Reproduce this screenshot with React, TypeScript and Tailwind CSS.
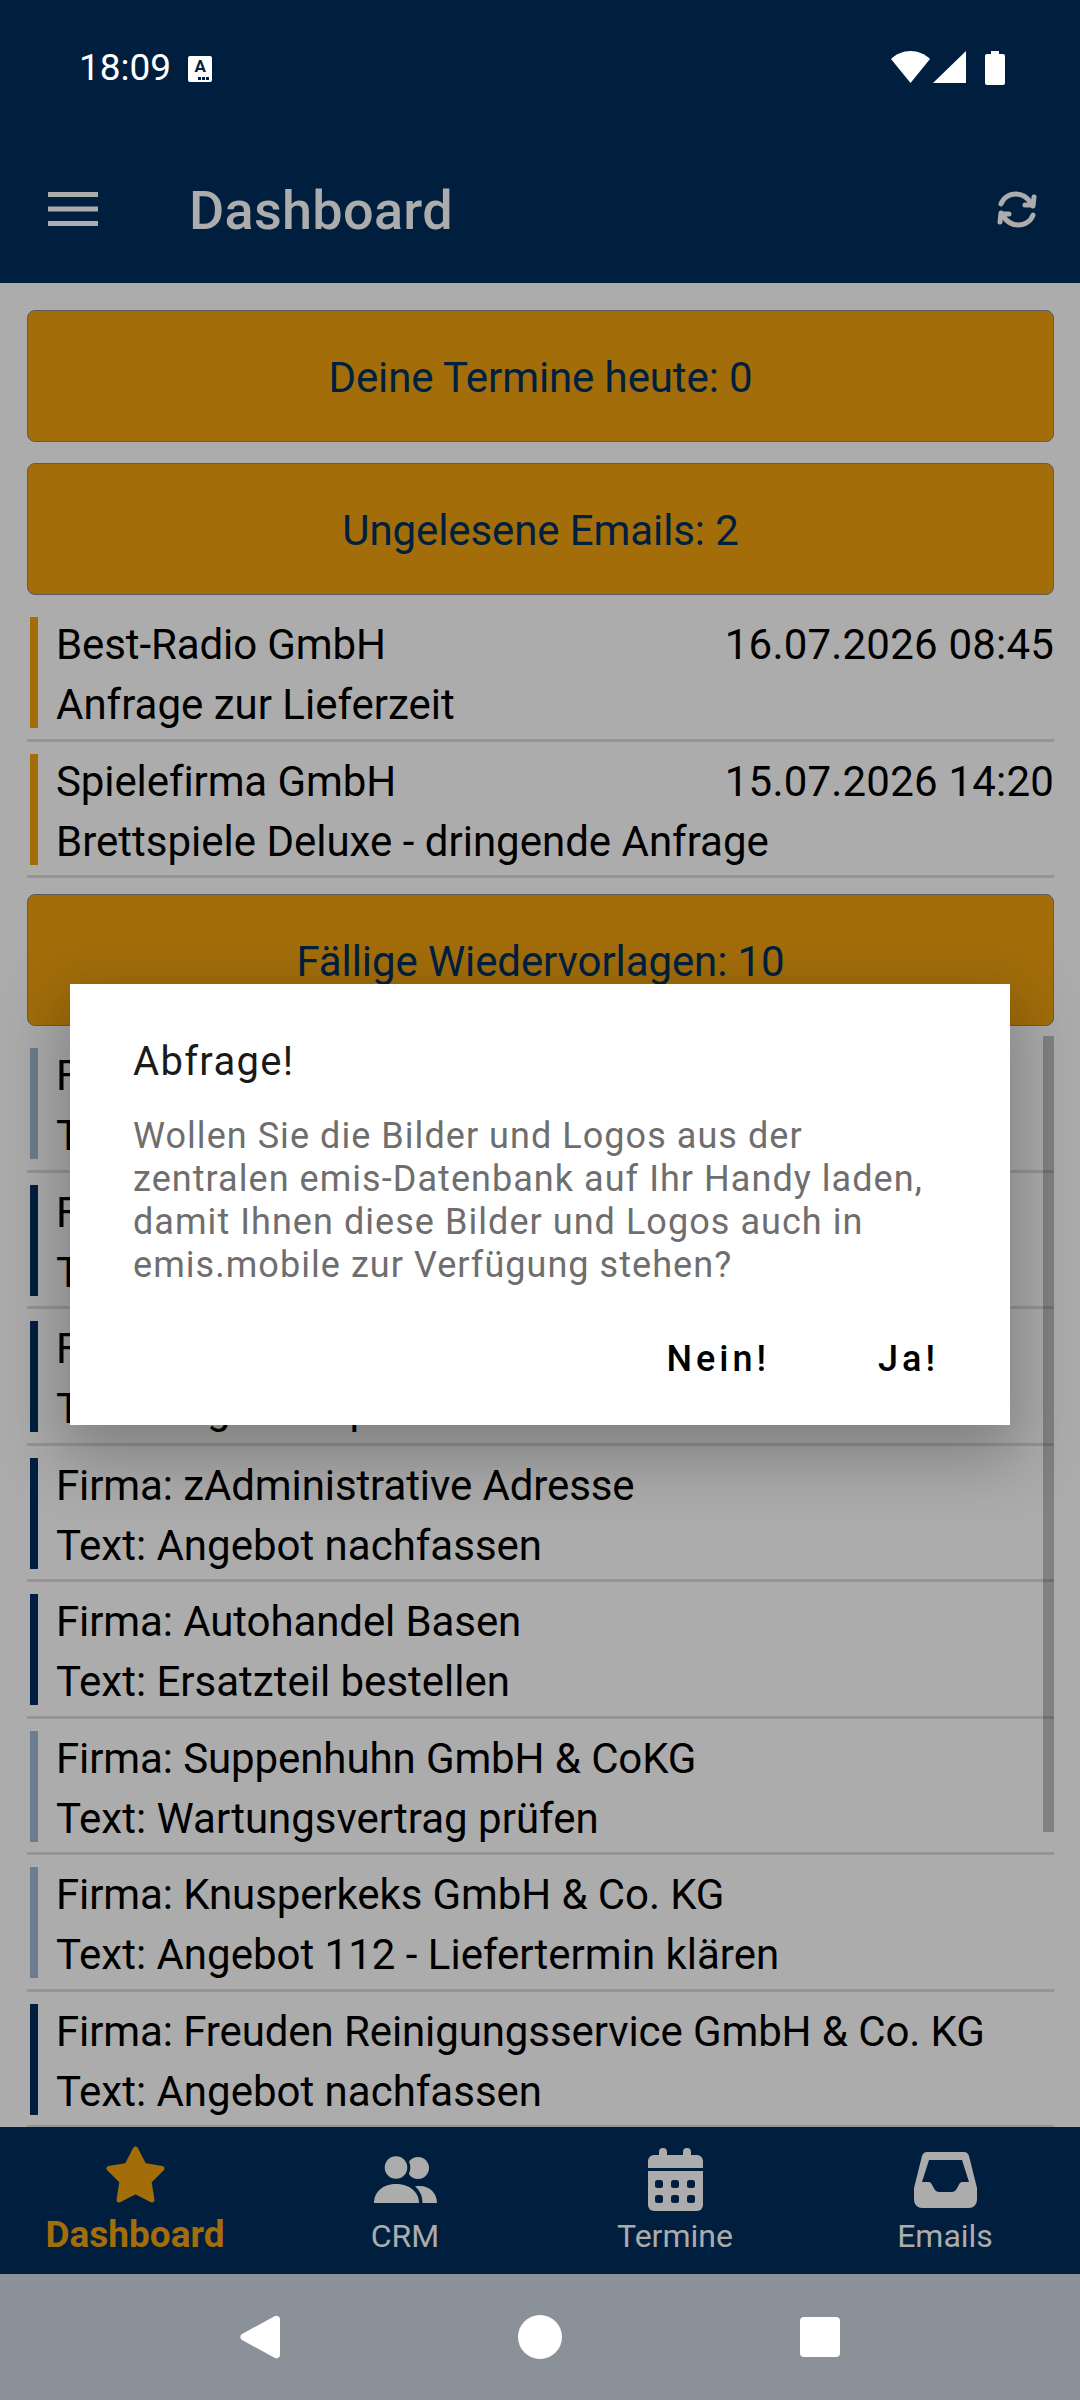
const navy = "#001f3f"

const emails = [
  { name: "Best-Radio GmbH", date: "16.07.2026 08:45", text: "Anfrage zur Lieferzeit" },
  { name: "Spielefirma GmbH", date: "15.07.2026 14:20", text: "Brettspiele Deluxe - dringende Anfrage" },
]

// the first three rows sit behind the dialog
const followUps = [
  { firma: "Firma:", text: "Text:", bar: "bg-[#6b7d8e]" },
  { firma: "Firma:", text: "Text:", bar: "bg-[#001f3f]" },
  { firma: "Firma:", text: "Text: Angebot Spedition", bar: "bg-[#001f3f]" },
  { firma: "Firma: zAdministrative Adresse", text: "Text: Angebot nachfassen", bar: "bg-[#001f3f]" },
  { firma: "Firma: Autohandel Basen", text: "Text: Ersatzteil bestellen", bar: "bg-[#001f3f]" },
  { firma: "Firma: Suppenhuhn GmbH & CoKG", text: "Text: Wartungsvertrag prüfen", bar: "bg-[#6b7d8e]" },
  { firma: "Firma: Knusperkeks GmbH & Co. KG", text: "Text: Angebot 112 - Liefertermin klären", bar: "bg-[#6b7d8e]" },
  { firma: "Firma: Freuden Reinigungsservice GmbH & Co. KG", text: "Text: Angebot nachfassen", bar: "bg-[#001f3f]" },
]

function Banner({ label, mb }: { label: string; mb: string }) {
  return (
    <div className={`h-[132px] ml-[27px] mr-[26px] ${mb} pt-[3px] flex items-center justify-center rounded-[8px] border-[1.5px] border-[#5c5c5c] bg-[#a36d0a] text-[42px] tracking-[-0.1px] text-[#00203f]`}>
      {label}
    </div>
  )
}

function Row({ bar, left, right, sub }: { bar: string; left: string; right?: string; sub: string }) {
  return (
    <div className="ml-[27px] mr-[26px] h-[136.5px] border-b-[3px] border-[#959595] pt-[12px] flex">
      <div className={`ml-[3px] h-[111px] w-[8px] shrink-0 ${bar}`}></div>
      <div className="ml-[18px] -mt-[2px] flex-1 text-[42px] leading-[60px] text-black whitespace-nowrap">
        <div className="flex justify-between tracking-[-0.1px]">
          <span>{left}</span>
          {right && <span className="tracking-[0.2px]">{right}</span>}
        </div>
        <div>{sub}</div>
      </div>
    </div>
  )
}

function TabItem({ icon, label, active }: { icon: React.ReactNode; label: string; active?: boolean }) {
  return (
    <div className={`flex-1 flex flex-col items-center pt-[19px] ${active ? "text-[#a36d0a]" : "text-[#acacac]"}`}>
      <div className="h-[71px] flex items-start justify-center">{icon}</div>
      <div className={active ? "text-[37px] leading-[40px] font-bold -mt-[2px]" : "text-[32px] leading-[40px] -mt-[1px]"}>{label}</div>
    </div>
  )
}

function StarIcon() {
  return (
    <svg width="59" height="57" viewBox="0 0 59 57">
      <path d="M29.500 3 38 19.500 56 22.500 43 35.500 46 54 29.500 45.500 13 54 16 35.500 3 22.500 21 19.500z" fill="currentColor" stroke="currentColor" strokeWidth="5" strokeLinejoin="round" />
    </svg>
  )
}

function PeopleIcon() {
  return (
    <svg className="mt-[9px]" width="63" height="48" viewBox="0 0 63 48" fill="currentColor">
      <circle cx="44" cy="13" r="11" />
      <circle cx="22" cy="12.500" r="12.800" stroke={navy} strokeWidth="3" />
      <path d="M41 31.500C55 29 63 38 63 48H48.500C48.500 41 46 35.500 41 31.500z" />
      <path d="M0 48C0 36 10 29 22 29s23 7 23 19z" />
    </svg>
  )
}

function CalendarIcon() {
  const dots = [11, 27, 43]
  return (
    <svg className="mt-[2px]" width="55" height="63" viewBox="0 0 55 63" fill="currentColor">
      <rect x="11" y="0" width="8" height="14" rx="4" />
      <rect x="35" y="0" width="8" height="14" rx="4" />
      <path d="M6 7H49a6 6 0 0 1 6 6v7H0v-7a6 6 0 0 1 6-6z" />
      <path fillRule="evenodd" d="M0 23H55V57a6 6 0 0 1-6 6H6a6 6 0 0 1-6-6z" />
      {dots.map((x) => (
        <g key={x} fill={navy}>
          <rect x={x - 4} y="32" width="8" height="8" rx="2.500" />
          <rect x={x - 4} y="47" width="8" height="8" rx="2.500" />
        </g>
      ))}
    </svg>
  )
}

function TrayIcon() {
  return (
    <svg className="mt-[6px]" width="63" height="56" viewBox="0 0 63 56" fill="currentColor">
      <path fillRule="evenodd" d="M14 0H49a6 6 0 0 1 6 4L63 36V48a8 8 0 0 1-8 8H8a8 8 0 0 1-8-8V36L8 4a6 6 0 0 1 6-4zM15 8 8 30H15C19 30 19 40 25 40H38C44 40 44 30 48 30H55L48 8z" />
    </svg>
  )
}

// refresh arrows in the app bar
function SyncIcon() {
  return (
    <svg className="-mt-[4px]" width="40" height="37" viewBox="0 0 40 37" fill="none" stroke="currentColor" strokeWidth="5" strokeLinecap="round" strokeLinejoin="round">
      <path d="M4 13C6 7 12 3 19 3c6 0 11 3 15 9" />
      <path d="M36 15 37 6M36 14H28" />
      <path d="M36 24C34 30 28 34 21 34c-6 0-11-3-15-9" />
      <path d="M4 22 3 31M4 23H12" />
    </svg>
  )
}

export default function App() {
  return (
    <div className="relative w-[1080px] h-[2400px] overflow-hidden bg-[#acacac] font-['Roboto',sans-serif]">
      {/* status bar + app bar */}
      <div className="h-[283px] bg-[#001f3f]">
        <div className="h-[133px] flex items-start justify-between pl-[79px] pr-[75px] pt-[47px]">
          <div className="flex items-center gap-[17px] text-white text-[37px] leading-[42px]">
            <span>18:09</span>
            <div className="relative w-[24px] h-[26px] mt-[2px] rounded-[2px] bg-white text-[#001f3f] text-[17px] leading-[21px] font-bold text-center">
              A
              <div className="absolute right-[3px] bottom-[2px] flex gap-[1px]">
                <span className="w-[3px] h-[3px] bg-[#001f3f]"></span>
                <span className="w-[3px] h-[3px] bg-[#001f3f]"></span>
                <span className="w-[3px] h-[3px] bg-[#001f3f]"></span>
              </div>
            </div>
          </div>
          <div className="flex items-start pt-[4px]">
            <svg width="39" height="32" viewBox="0 0 39 32">
              <path d="M0 8C5 3 12 0 19.500 0S34 3 39 8L19.500 32z" fill="#fff" />
            </svg>
            <svg className="ml-[3px]" width="33" height="32" viewBox="0 0 33 32">
              <path d="M33 0v32H0z" fill="#fff" />
            </svg>
            <svg className="ml-[19px]" width="20" height="34" viewBox="0 0 20 34">
              <path d="M6 0h8v3h4a2 2 0 0 1 2 2v27a2 2 0 0 1-2 2H2a2 2 0 0 1-2-2V5a2 2 0 0 1 2-2h4z" fill="#fff" />
            </svg>
          </div>
        </div>
        <div className="flex items-center h-[150px] pl-[48px] pr-[43px] pt-[6px] text-[#acacac]">
          <svg className="-mt-[4px]" width="50" height="34" viewBox="0 0 50 34" fill="currentColor">
            <rect width="50" height="5" />
            <rect y="14.500" width="50" height="5" />
            <rect y="29" width="50" height="5" />
          </svg>
          <div className="ml-[91px] flex-1 text-[54px] leading-[64px] tracking-[0.3px] font-medium">Dashboard</div>
          <SyncIcon />
        </div>
      </div>

      {/* content */}
      <div className="h-[1844px] overflow-hidden pt-[27px]">
        <Banner label="Deine Termine heute: 0" mb="mb-[21px]" />
        <Banner label="Ungelesene Emails: 2" mb="mb-[10px]" />
        {emails.map((e) => (
          <Row key={e.name} bar="bg-[#a36d0a]" left={e.name} right={e.date} sub={e.text} />
        ))}
        <div className="h-[16px]"></div>
        <Banner label="Fällige Wiedervorlagen: 10" mb="mb-[10px]" />
        {followUps.map((f, i) => (
          <Row key={i} bar={f.bar} left={f.firma} sub={f.text} />
        ))}
      </div>

      {/* tab bar */}
      <div className="h-[147px] bg-[#001f3f] flex">
        <TabItem icon={<StarIcon />} label="Dashboard" active />
        <TabItem icon={<PeopleIcon />} label="CRM" />
        <TabItem icon={<CalendarIcon />} label="Termine" />
        <TabItem icon={<TrayIcon />} label="Emails" />
      </div>

      {/* android nav */}
      <div className="h-[126px] bg-[#8a9199] flex items-center justify-center gap-[238px]">
        <svg width="40" height="44" viewBox="0 0 40 44">
          <path d="M35 1 2 19a3.500 3.500 0 0 0 0 6l33 18a3.500 3.500 0 0 0 5-3V4a3.500 3.500 0 0 0-5-3z" fill="#fff" />
        </svg>
        <div className="w-[44px] h-[44px] rounded-full bg-white"></div>
        <div className="w-[40px] h-[40px] rounded-[4px] bg-white"></div>
      </div>

      {/* scrollbar */}
      <div className="absolute left-[1043px] top-[1036px] w-[11px] h-[796px] bg-black/25"></div>

      {/* dialog */}
      <div className="absolute left-[70px] top-[984px] w-[940px] h-[441px] bg-white shadow-[0_24px_60px_10px_rgba(0,0,0,0.25)] pl-[63px] pr-[70px] pt-[55px]">
        <div className="text-[40px] leading-[46px] tracking-[1.3px] text-[#1a1a1a]">Abfrage!</div>
        <div className="mt-[30px] text-[36px] leading-[43px] tracking-[1.05px] text-[#6e6e6e]">
          Wollen Sie die Bilder und Logos aus der zentralen emis-Datenbank auf Ihr Handy laden, damit Ihnen diese Bilder und Logos auch in emis.mobile zur Verfügung stehen?
        </div>
        <div className="absolute right-[71px] bottom-[46px] flex gap-[108px] text-[36px] leading-[40px] font-medium tracking-[4px] text-black">
          <span>Nein!</span>
          <span>Ja!</span>
        </div>
      </div>
    </div>
  )
}
